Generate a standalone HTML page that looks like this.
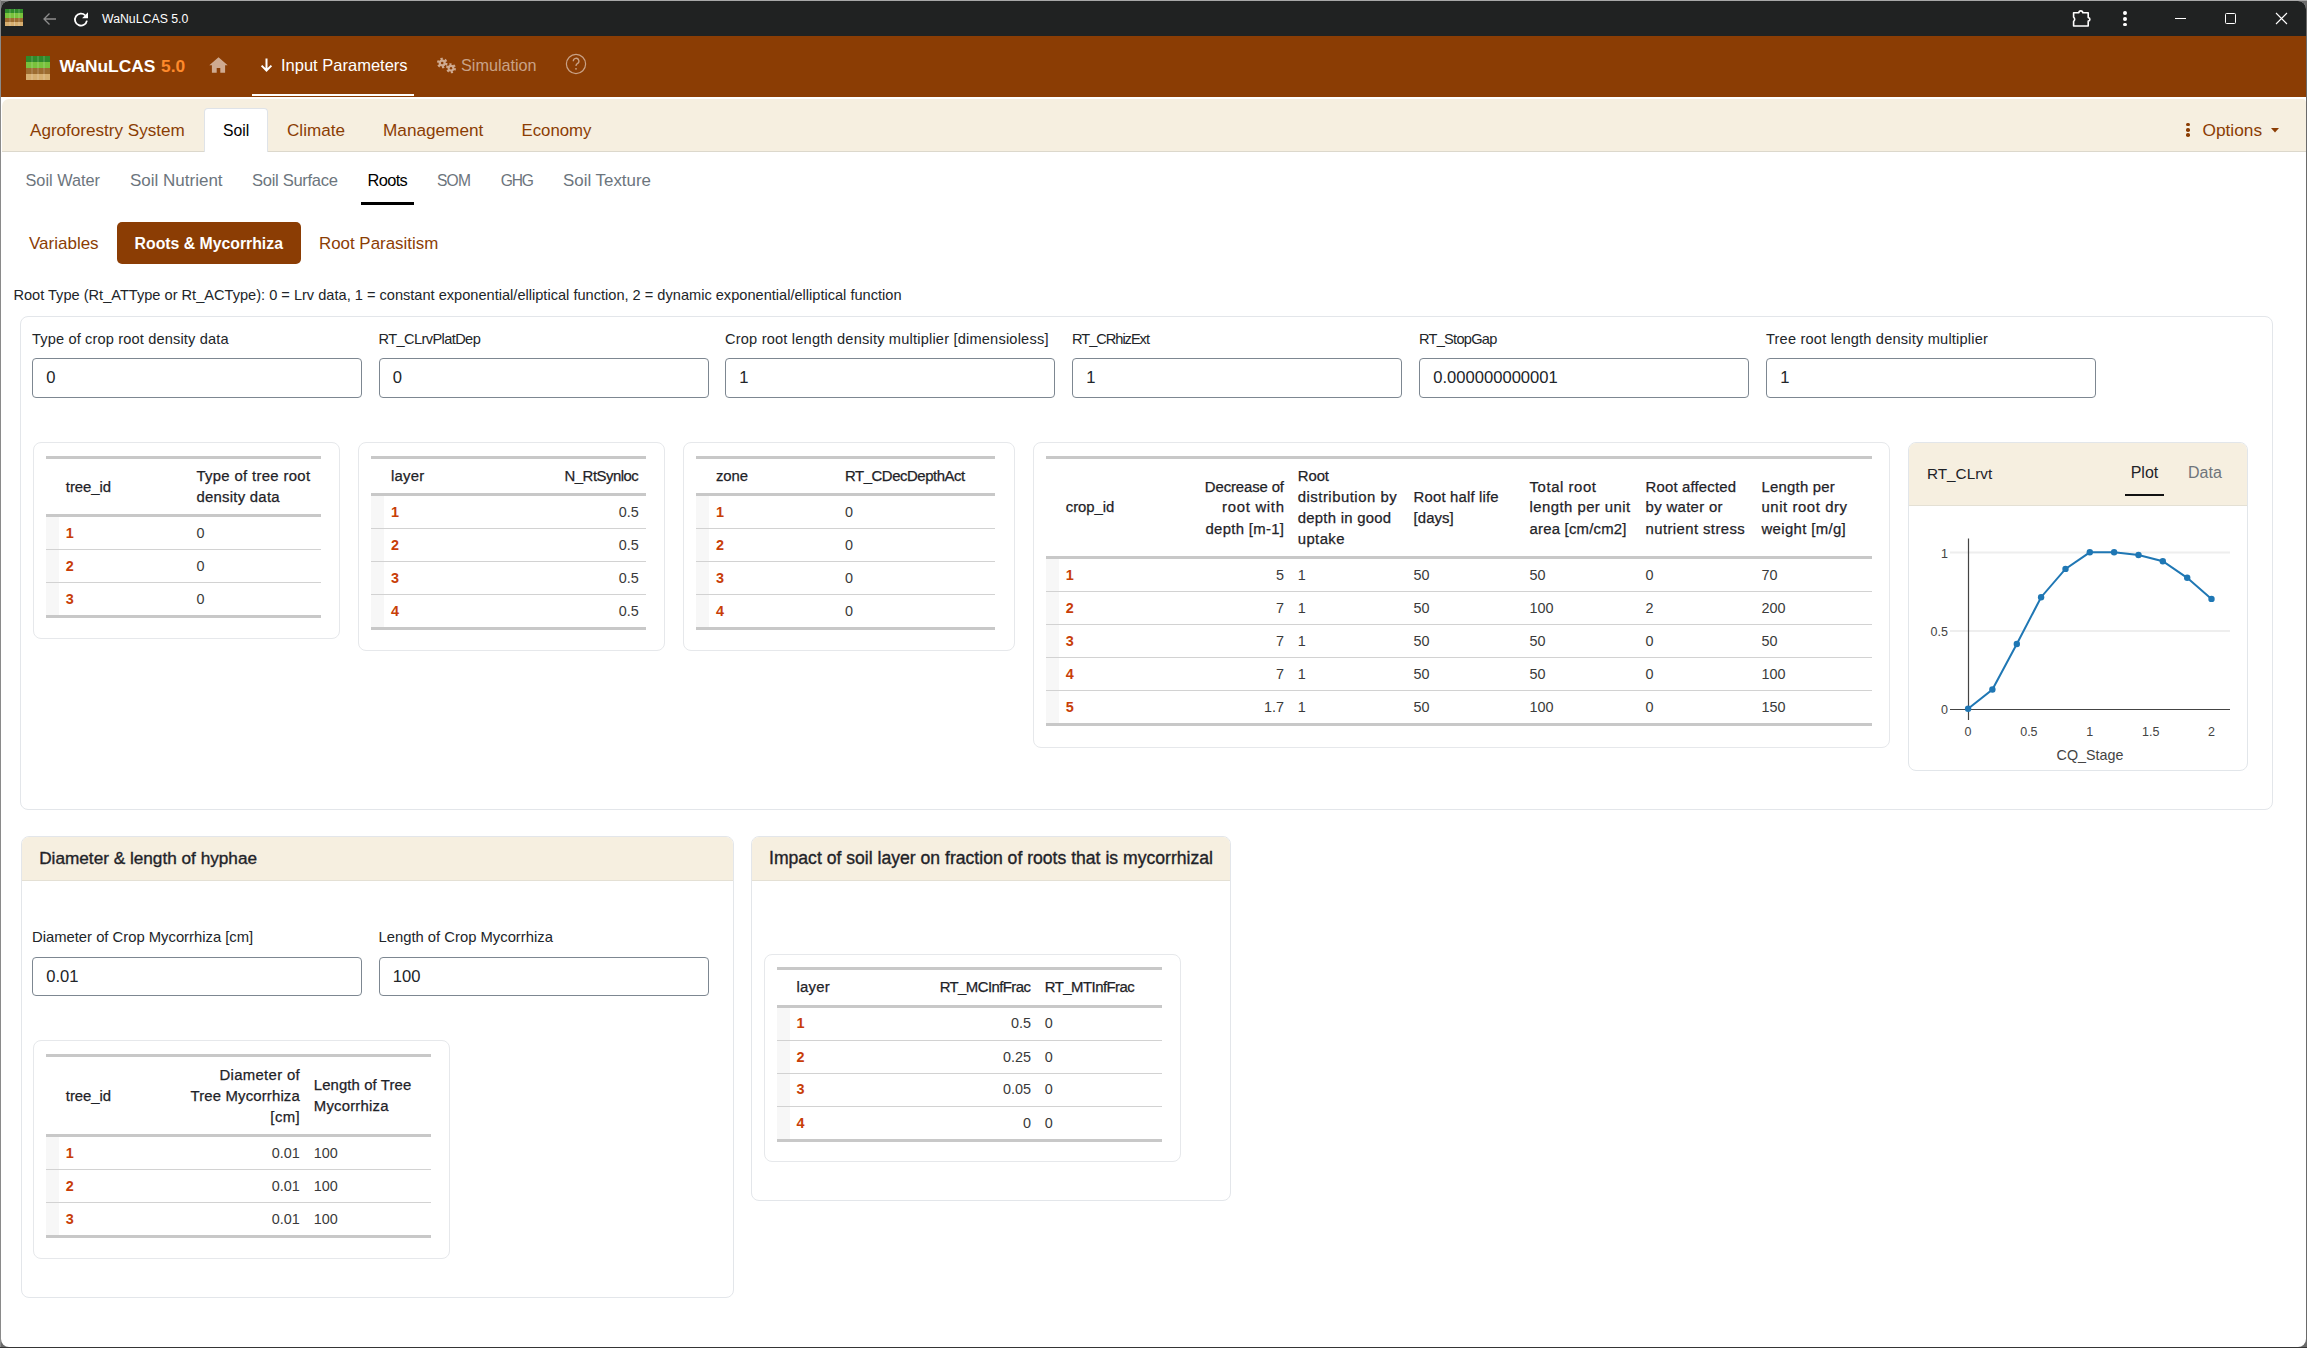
<!DOCTYPE html>
<html><head><meta charset="utf-8"><title>WaNuLCAS 5.0</title>
<style>
html,body{margin:0;padding:0}
body{width:2307px;height:1348px;overflow:hidden;position:relative;background:#6a6a6a;font-family:"Liberation Sans",sans-serif}
#win{position:absolute;left:1px;top:1px;width:2305px;height:1346px;background:#fff;border-radius:8px;overflow:hidden}
#tb{position:absolute;left:0;top:0;width:2307px;height:36px;background:#202222}
.t{position:absolute;white-space:pre}
.r{position:absolute}
</style></head><body>
<div style="position:absolute;left:0;top:0;width:2307px;height:1px;background:#a8a8a8"></div><div style="position:absolute;left:0;top:0;width:1px;height:1348px;background:#8a8a8a"></div><div style="position:absolute;left:0;top:1347px;width:2307px;height:1px;background:#353535"></div><div id="win"><div id="tb"></div></div>
<div style="position:absolute;left:0;top:0;width:2307px;height:1348px">
<div class="r" style="left:1px;top:36px;width:2305px;height:61px;background:#8b3d04"></div>
<svg class="r" style="left:5px;top:9px" width="18" height="17" viewBox="0 0 18 17">
<rect x="0" y="0" width="18" height="4" fill="#2f8a2a"/><rect x="0" y="4" width="18" height="5" fill="#78c23c"/>
<rect x="0" y="9" width="18" height="4" fill="#9d6c30"/><rect x="0" y="13" width="18" height="4" fill="#d6ae70"/>
<rect x="4.5" y="0" width="1" height="17" fill="#fff" opacity=".25"/><rect x="9" y="0" width="1" height="17" fill="#fff" opacity=".25"/><rect x="13.5" y="0" width="1" height="17" fill="#fff" opacity=".25"/>
</svg>
<svg class="r" style="left:42px;top:12px" width="15" height="14" viewBox="0 0 15 14"><path d="M14 7H2M7.5 1.5L2 7l5.5 5.5" stroke="#8d8d8d" stroke-width="1.3" fill="none"/></svg>
<svg class="r" style="left:73px;top:10.5px" width="17" height="17" viewBox="0 0 17 17"><path d="M13.9 9.6A6 6 0 1 1 12.2 4.3" stroke="#fff" stroke-width="1.8" fill="none"/><path d="M15 1.3V7.2H9.1z" fill="#fff"/></svg>
<div class="t" style="left:102.0px;top:12.00px;font-size:12.3px;line-height:15px;color:#ffffff;">WaNuLCAS 5.0</div>
<svg class="r" style="left:2072px;top:9px" width="21" height="19" viewBox="0 0 21 19"><path d="M1.6 3.8H6.9A1.9 1.9 0 0 1 10.7 3.8H16.2V8.6A1.7 1.7 0 0 1 16.2 12V17H1.6V12.4A2.6 2.6 0 0 0 1.6 8.2Z" stroke="#fff" stroke-width="1.6" fill="none" stroke-linejoin="round"/></svg>
<div class="r" style="left:2122.8px;top:10.9px;width:3.8px;height:3.8px;border-radius:50%;background:#fff"></div>
<div class="r" style="left:2122.8px;top:16.8px;width:3.8px;height:3.8px;border-radius:50%;background:#fff"></div>
<div class="r" style="left:2122.8px;top:22.5px;width:3.8px;height:3.8px;border-radius:50%;background:#fff"></div>
<div class="r" style="left:2175px;top:18px;width:11px;height:1.2px;background:#fff"></div>
<div class="r" style="left:2225px;top:13px;width:11px;height:11px;border:1.1px solid #fff;border-radius:1.5px;box-sizing:border-box"></div>
<svg class="r" style="left:2275px;top:12px" width="13" height="13" viewBox="0 0 13 13"><path d="M1 1L12 12M12 1L1 12" stroke="#fff" stroke-width="1.1"/></svg>
<svg class="r" style="left:26px;top:56px" width="24" height="24" viewBox="0 0 24 24">
<rect x="0" y="0" width="24" height="6" fill="#2f8a2a"/><rect x="0" y="6" width="24" height="6" fill="#78c23c"/>
<rect x="0" y="12" width="24" height="6" fill="#9d6c30"/><rect x="0" y="18" width="24" height="6" fill="#d6ae70"/>
<rect x="5.5" y="0" width="1" height="24" fill="#fff" opacity=".25"/><rect x="11.5" y="0" width="1" height="24" fill="#fff" opacity=".25"/><rect x="17.5" y="0" width="1" height="24" fill="#fff" opacity=".25"/>
</svg>
<div class="t" style="left:59.5px;top:55.00px;font-size:17.4px;line-height:22px;color:#ffffff;font-weight:700;">WaNuLCAS</div>
<div class="t" style="left:161.0px;top:55.00px;font-size:17.4px;line-height:22px;color:#ff8a2b;font-weight:700;">5.0</div>
<svg class="r" style="left:209px;top:57px" width="19" height="16" viewBox="0 0 19 16"><path d="M9.5 0.3L0.3 8.3H2.9V15.8H7.7V11H11.3V15.8H16.1V8.3H18.7Z" fill="#cfaa90"/></svg>
<svg class="r" style="left:260px;top:58px" width="13" height="15" viewBox="0 0 13 15"><path d="M6.5 0.5V12.5M1.6 7.6L6.5 12.5L11.4 7.6" stroke="#fff" stroke-width="2" fill="none"/></svg>
<div class="t" style="left:281.0px;top:55.00px;font-size:16.5px;line-height:21px;color:#ffffff;">Input Parameters</div>
<div class="r" style="left:252px;top:93.5px;width:162px;height:2.5px;background:#fff"></div>
<svg class="r" style="left:436px;top:57px" width="22" height="18" viewBox="0 0 22 18">
<circle cx="6.2" cy="6" r="3.9" fill="none" stroke="#cfaa90" stroke-width="2.8" stroke-dasharray="2.1 1.98"/>
<circle cx="6.2" cy="6" r="3.6" fill="#cfaa90"/><circle cx="6.2" cy="6" r="1.3" fill="#8b3d04"/>
<circle cx="15" cy="11.2" r="3.7" fill="none" stroke="#cfaa90" stroke-width="2.6" stroke-dasharray="1.95 1.92"/>
<circle cx="15" cy="11.2" r="3.4" fill="#cfaa90"/><circle cx="15" cy="11.2" r="1.2" fill="#8b3d04"/>
</svg>
<div class="t" style="left:461.0px;top:55.00px;font-size:16.2px;line-height:20px;color:#c9a287;">Simulation</div>
<svg class="r" style="left:565px;top:52.8px" width="22" height="22" viewBox="0 0 22 22"><circle cx="11" cy="11" r="9.6" stroke="#c9a287" stroke-width="1.2" fill="none"/><path d="M8.3 8.2A2.8 2.8 0 1 1 12.3 10.6C11.3 11.2 11 11.8 11 13" stroke="#c9a287" stroke-width="1.3" fill="none"/><circle cx="11" cy="15.8" r="0.9" fill="#c9a287"/></svg>
<div class="r" style="left:1px;top:97px;width:2305px;height:55px;background:#fff"></div>
<div class="r" style="left:2px;top:99px;width:2304px;height:52px;background:#f6efe0;border-radius:7px 4px 0 0;border-bottom:1px solid #dcd8cc"></div>
<div class="r" style="left:204px;top:108px;width:64px;height:44px;background:#fff;border:1px solid #dfe3e8;border-bottom:none;border-radius:4px 4px 0 0;box-sizing:border-box"></div>
<div class="t" style="left:30.0px;top:120.00px;font-size:17.1px;line-height:21px;color:#8b3d04;">Agroforestry System</div>
<div class="t" style="left:223.0px;top:121.00px;font-size:15.75px;line-height:20px;color:#000000;">Soil</div>
<div class="t" style="left:287.0px;top:120.00px;font-size:17.1px;line-height:21px;color:#8b3d04;">Climate</div>
<div class="t" style="left:383.0px;top:119.00px;font-size:17.2px;line-height:22px;color:#8b3d04;">Management</div>
<div class="t" style="left:521.5px;top:120.00px;font-size:16.8px;line-height:21px;color:#8b3d04;">Economy</div>
<div class="r" style="left:2186.2px;top:122.8px;width:3.6px;height:3.6px;border-radius:50%;background:#8b3d04"></div>
<div class="r" style="left:2186.2px;top:128.1px;width:3.6px;height:3.6px;border-radius:50%;background:#8b3d04"></div>
<div class="r" style="left:2186.2px;top:133.2px;width:3.6px;height:3.6px;border-radius:50%;background:#8b3d04"></div>
<div class="t" style="left:2202.5px;top:119.00px;font-size:17.3px;line-height:22px;color:#8b3d04;">Options</div>
<svg class="r" style="left:2271px;top:128px" width="8" height="4.5" viewBox="0 0 8 4.5"><path d="M0 0H8L4 4.5Z" fill="#8b3d04"/></svg>
<div class="t" style="left:25.5px;top:170.00px;font-size:16.3px;line-height:20px;color:#6c757d;">Soil Water</div>
<div class="t" style="left:130.0px;top:170.00px;font-size:17.0px;line-height:21px;color:#6c757d;">Soil Nutrient</div>
<div class="t" style="left:252.0px;top:170.00px;font-size:16.6px;line-height:21px;color:#6c757d;letter-spacing:-0.316px;">Soil Surface</div>
<div class="t" style="left:367.5px;top:170.00px;font-size:16.4px;line-height:20px;color:#000000;letter-spacing:-0.626px;">Roots</div>
<div class="r" style="left:361px;top:201.5px;width:53px;height:3px;background:#000"></div>
<div class="t" style="left:437.0px;top:171.00px;font-size:15.6px;line-height:20px;color:#6c757d;letter-spacing:-0.784px;">SOM</div>
<div class="t" style="left:500.8px;top:171.00px;font-size:15.6px;line-height:20px;color:#6c757d;letter-spacing:-1.184px;">GHG</div>
<div class="t" style="left:563.0px;top:170.00px;font-size:16.9px;line-height:21px;color:#6c757d;">Soil Texture</div>
<div class="t" style="left:29.0px;top:233.00px;font-size:17.0px;line-height:21px;color:#8b3d04;">Variables</div>
<div class="r" style="left:117px;top:222px;width:184px;height:42px;background:#8b3d04;border-radius:5px"></div>
<div class="t" style="left:134.6px;top:234.00px;font-size:15.8px;line-height:20px;color:#ffffff;font-weight:700;">Roots &amp; Mycorrhiza</div>
<div class="t" style="left:319.0px;top:233.00px;font-size:16.9px;line-height:21px;color:#8b3d04;">Root Parasitism</div>
<div class="t" style="left:13.4px;top:286.00px;font-size:14.6px;line-height:18px;color:#212529;">Root Type (Rt_ATType or Rt_ACType): 0 = Lrv data, 1 = constant exponential/elliptical function, 2 = dynamic exponential/elliptical function</div>
<div class="r" style="left:20px;top:316px;width:2253px;height:494px;border:1px solid #e3e6ea;border-radius:8px;box-sizing:border-box"></div>
<div class="t" style="left:32.0px;top:330.00px;font-size:14.6px;line-height:18px;color:#212529;letter-spacing:0.147px;">Type of crop root density data</div>
<div class="r" style="left:32px;top:358px;width:330px;height:40px;border:1px solid #7d8791;border-radius:4px;box-sizing:border-box;background:#fff"></div>
<div class="t" style="left:46.2px;top:367.00px;font-size:16.6px;line-height:21px;color:#212529;">0</div>
<div class="t" style="left:378.5px;top:330.00px;font-size:14.6px;line-height:18px;color:#212529;letter-spacing:-0.599px;">RT_CLrvPlatDep</div>
<div class="r" style="left:378.5px;top:358px;width:330px;height:40px;border:1px solid #7d8791;border-radius:4px;box-sizing:border-box;background:#fff"></div>
<div class="t" style="left:392.7px;top:367.00px;font-size:16.6px;line-height:21px;color:#212529;">0</div>
<div class="t" style="left:725.0px;top:330.00px;font-size:14.6px;line-height:18px;color:#212529;letter-spacing:0.195px;">Crop root length density multiplier [dimensioless]</div>
<div class="r" style="left:725px;top:358px;width:330px;height:40px;border:1px solid #7d8791;border-radius:4px;box-sizing:border-box;background:#fff"></div>
<div class="t" style="left:739.2px;top:367.00px;font-size:16.6px;line-height:21px;color:#212529;">1</div>
<div class="t" style="left:1072.0px;top:330.00px;font-size:14.6px;line-height:18px;color:#212529;letter-spacing:-1.018px;">RT_CRhizExt</div>
<div class="r" style="left:1072px;top:358px;width:330px;height:40px;border:1px solid #7d8791;border-radius:4px;box-sizing:border-box;background:#fff"></div>
<div class="t" style="left:1086.2px;top:367.00px;font-size:16.6px;line-height:21px;color:#212529;">1</div>
<div class="t" style="left:1419.0px;top:330.00px;font-size:14.6px;line-height:18px;color:#212529;letter-spacing:-0.741px;">RT_StopGap</div>
<div class="r" style="left:1419px;top:358px;width:330px;height:40px;border:1px solid #7d8791;border-radius:4px;box-sizing:border-box;background:#fff"></div>
<div class="t" style="left:1433.2px;top:367.00px;font-size:16.6px;line-height:21px;color:#212529;">0.000000000001</div>
<div class="t" style="left:1766.0px;top:330.00px;font-size:14.6px;line-height:18px;color:#212529;letter-spacing:0.196px;">Tree root length density multiplier</div>
<div class="r" style="left:1766px;top:358px;width:330px;height:40px;border:1px solid #7d8791;border-radius:4px;box-sizing:border-box;background:#fff"></div>
<div class="t" style="left:1780.2px;top:367.00px;font-size:16.6px;line-height:21px;color:#212529;">1</div>
<div class="r" style="left:32.5px;top:442px;width:307.5px;height:196.5px;border:1px solid #e6e8eb;border-radius:8px;box-sizing:border-box"></div>
<div class="r" style="left:46px;top:456px;width:275px;height:3px;background:#c8c8c8"></div>
<div class="r" style="left:46px;top:514px;width:275px;height:3px;background:#c8c8c8"></div>
<div class="r" style="left:46px;top:517px;width:13px;height:99px;background:#f7f7f7"></div>
<div class="r" style="left:46px;top:549px;width:275px;height:1px;background:#d2d2d2"></div>
<div class="r" style="left:46px;top:582px;width:275px;height:1px;background:#d2d2d2"></div>
<div class="r" style="left:46px;top:615px;width:275px;height:3px;background:#c8c8c8"></div>
<div class="t" style="left:65.8px;top:478.00px;font-size:14.9px;line-height:19px;color:#1f2328;-webkit-text-stroke:0.25px #1f2328;letter-spacing:-0.049px;">tree_id</div>
<div class="t" style="left:196.4px;top:467.00px;font-size:14.9px;line-height:19px;color:#1f2328;-webkit-text-stroke:0.25px #1f2328;letter-spacing:0.327px;">Type of tree root</div>
<div class="t" style="left:196.4px;top:488.00px;font-size:14.9px;line-height:19px;color:#1f2328;-webkit-text-stroke:0.25px #1f2328;letter-spacing:0.265px;">density data</div>
<div class="t" style="left:65.8px;top:524.00px;font-size:14.4px;line-height:18px;color:#c83e08;font-weight:700;">1</div>
<div class="t" style="left:196.4px;top:524.00px;font-size:14.4px;line-height:18px;color:#3a3a3a;">0</div>
<div class="t" style="left:65.8px;top:557.00px;font-size:14.4px;line-height:18px;color:#c83e08;font-weight:700;">2</div>
<div class="t" style="left:196.4px;top:557.00px;font-size:14.4px;line-height:18px;color:#3a3a3a;">0</div>
<div class="t" style="left:65.8px;top:590.00px;font-size:14.4px;line-height:18px;color:#c83e08;font-weight:700;">3</div>
<div class="t" style="left:196.4px;top:590.00px;font-size:14.4px;line-height:18px;color:#3a3a3a;">0</div>
<div class="r" style="left:357.5px;top:442px;width:307.5px;height:208.5px;border:1px solid #e6e8eb;border-radius:8px;box-sizing:border-box"></div>
<div class="r" style="left:371px;top:456px;width:275px;height:3px;background:#c8c8c8"></div>
<div class="r" style="left:371px;top:493px;width:275px;height:3px;background:#c8c8c8"></div>
<div class="r" style="left:371px;top:496px;width:13px;height:132px;background:#f7f7f7"></div>
<div class="r" style="left:371px;top:528px;width:275px;height:1px;background:#d2d2d2"></div>
<div class="r" style="left:371px;top:561px;width:275px;height:1px;background:#d2d2d2"></div>
<div class="r" style="left:371px;top:594px;width:275px;height:1px;background:#d2d2d2"></div>
<div class="r" style="left:371px;top:627px;width:275px;height:3px;background:#c8c8c8"></div>
<div class="t" style="left:390.9px;top:467.00px;font-size:14.9px;line-height:19px;color:#1f2328;-webkit-text-stroke:0.25px #1f2328;letter-spacing:0.267px;">layer</div>
<div class="t" style="right:1668.7px;text-align:right;top:467.00px;font-size:14.9px;line-height:19px;color:#1f2328;-webkit-text-stroke:0.25px #1f2328;letter-spacing:-0.486px;">N_RtSynloc</div>
<div class="t" style="left:390.9px;top:503.00px;font-size:14.4px;line-height:18px;color:#c83e08;font-weight:700;">1</div>
<div class="t" style="right:1668.2px;text-align:right;top:503.00px;font-size:14.4px;line-height:18px;color:#3a3a3a;">0.5</div>
<div class="t" style="left:390.9px;top:536.00px;font-size:14.4px;line-height:18px;color:#c83e08;font-weight:700;">2</div>
<div class="t" style="right:1668.2px;text-align:right;top:536.00px;font-size:14.4px;line-height:18px;color:#3a3a3a;">0.5</div>
<div class="t" style="left:390.9px;top:569.00px;font-size:14.4px;line-height:18px;color:#c83e08;font-weight:700;">3</div>
<div class="t" style="right:1668.2px;text-align:right;top:569.00px;font-size:14.4px;line-height:18px;color:#3a3a3a;">0.5</div>
<div class="t" style="left:390.9px;top:602.00px;font-size:14.4px;line-height:18px;color:#c83e08;font-weight:700;">4</div>
<div class="t" style="right:1668.2px;text-align:right;top:602.00px;font-size:14.4px;line-height:18px;color:#3a3a3a;">0.5</div>
<div class="r" style="left:682.5px;top:442px;width:332.0px;height:208.5px;border:1px solid #e6e8eb;border-radius:8px;box-sizing:border-box"></div>
<div class="r" style="left:696px;top:456px;width:299px;height:3px;background:#c8c8c8"></div>
<div class="r" style="left:696px;top:493px;width:299px;height:3px;background:#c8c8c8"></div>
<div class="r" style="left:696px;top:496px;width:13px;height:132px;background:#f7f7f7"></div>
<div class="r" style="left:696px;top:528px;width:299px;height:1px;background:#d2d2d2"></div>
<div class="r" style="left:696px;top:561px;width:299px;height:1px;background:#d2d2d2"></div>
<div class="r" style="left:696px;top:594px;width:299px;height:1px;background:#d2d2d2"></div>
<div class="r" style="left:696px;top:627px;width:299px;height:3px;background:#c8c8c8"></div>
<div class="t" style="left:716.0px;top:467.00px;font-size:14.9px;line-height:19px;color:#1f2328;-webkit-text-stroke:0.25px #1f2328;letter-spacing:-0.078px;">zone</div>
<div class="t" style="left:845.0px;top:467.00px;font-size:14.9px;line-height:19px;color:#1f2328;-webkit-text-stroke:0.25px #1f2328;letter-spacing:-0.445px;">RT_CDecDepthAct</div>
<div class="t" style="left:716.0px;top:503.00px;font-size:14.4px;line-height:18px;color:#c83e08;font-weight:700;">1</div>
<div class="t" style="left:845.0px;top:503.00px;font-size:14.4px;line-height:18px;color:#3a3a3a;">0</div>
<div class="t" style="left:716.0px;top:536.00px;font-size:14.4px;line-height:18px;color:#c83e08;font-weight:700;">2</div>
<div class="t" style="left:845.0px;top:536.00px;font-size:14.4px;line-height:18px;color:#3a3a3a;">0</div>
<div class="t" style="left:716.0px;top:569.00px;font-size:14.4px;line-height:18px;color:#c83e08;font-weight:700;">3</div>
<div class="t" style="left:845.0px;top:569.00px;font-size:14.4px;line-height:18px;color:#3a3a3a;">0</div>
<div class="t" style="left:716.0px;top:602.00px;font-size:14.4px;line-height:18px;color:#c83e08;font-weight:700;">4</div>
<div class="t" style="left:845.0px;top:602.00px;font-size:14.4px;line-height:18px;color:#3a3a3a;">0</div>
<div class="r" style="left:1032.5px;top:442px;width:857.5px;height:305.5px;border:1px solid #e6e8eb;border-radius:8px;box-sizing:border-box"></div>
<div class="r" style="left:1046px;top:456px;width:825.5px;height:3px;background:#c8c8c8"></div>
<div class="r" style="left:1046px;top:556px;width:825.5px;height:3px;background:#c8c8c8"></div>
<div class="r" style="left:1046px;top:559px;width:13px;height:165px;background:#f7f7f7"></div>
<div class="r" style="left:1046px;top:591px;width:825.5px;height:1px;background:#d2d2d2"></div>
<div class="r" style="left:1046px;top:624px;width:825.5px;height:1px;background:#d2d2d2"></div>
<div class="r" style="left:1046px;top:657px;width:825.5px;height:1px;background:#d2d2d2"></div>
<div class="r" style="left:1046px;top:690px;width:825.5px;height:1px;background:#d2d2d2"></div>
<div class="r" style="left:1046px;top:723px;width:825.5px;height:3px;background:#c8c8c8"></div>
<div class="t" style="left:1065.8px;top:498.00px;font-size:14.9px;line-height:19px;color:#1f2328;-webkit-text-stroke:0.25px #1f2328;letter-spacing:-0.079px;">crop_id</div>
<div class="t" style="right:1023.1px;text-align:right;top:478.00px;font-size:14.9px;line-height:19px;color:#1f2328;-webkit-text-stroke:0.25px #1f2328;letter-spacing:-0.109px;">Decrease of</div>
<div class="t" style="right:1022.3px;text-align:right;top:498.00px;font-size:14.9px;line-height:19px;color:#1f2328;-webkit-text-stroke:0.25px #1f2328;letter-spacing:0.710px;">root with</div>
<div class="t" style="right:1022.7px;text-align:right;top:520.00px;font-size:14.9px;line-height:19px;color:#1f2328;-webkit-text-stroke:0.25px #1f2328;letter-spacing:0.321px;">depth [m-1]</div>
<div class="t" style="left:1297.7px;top:467.00px;font-size:14.9px;line-height:19px;color:#1f2328;-webkit-text-stroke:0.25px #1f2328;letter-spacing:-0.046px;">Root</div>
<div class="t" style="left:1297.7px;top:488.00px;font-size:14.9px;line-height:19px;color:#1f2328;-webkit-text-stroke:0.25px #1f2328;letter-spacing:0.505px;">distribution by</div>
<div class="t" style="left:1297.7px;top:509.00px;font-size:14.9px;line-height:19px;color:#1f2328;-webkit-text-stroke:0.25px #1f2328;letter-spacing:0.259px;">depth in good</div>
<div class="t" style="left:1297.7px;top:530.00px;font-size:14.9px;line-height:19px;color:#1f2328;-webkit-text-stroke:0.25px #1f2328;letter-spacing:0.425px;">uptake</div>
<div class="t" style="left:1413.6px;top:488.00px;font-size:14.9px;line-height:19px;color:#1f2328;-webkit-text-stroke:0.25px #1f2328;letter-spacing:0.166px;">Root half life</div>
<div class="t" style="left:1413.6px;top:509.00px;font-size:14.9px;line-height:19px;color:#1f2328;-webkit-text-stroke:0.25px #1f2328;letter-spacing:0.063px;">[days]</div>
<div class="t" style="left:1529.6px;top:478.00px;font-size:14.9px;line-height:19px;color:#1f2328;-webkit-text-stroke:0.25px #1f2328;letter-spacing:0.565px;">Total root</div>
<div class="t" style="left:1529.6px;top:498.00px;font-size:14.9px;line-height:19px;color:#1f2328;-webkit-text-stroke:0.25px #1f2328;letter-spacing:0.445px;">length per unit</div>
<div class="t" style="left:1529.6px;top:520.00px;font-size:14.9px;line-height:19px;color:#1f2328;-webkit-text-stroke:0.25px #1f2328;letter-spacing:0.209px;">area [cm/cm2]</div>
<div class="t" style="left:1645.6px;top:478.00px;font-size:14.9px;line-height:19px;color:#1f2328;-webkit-text-stroke:0.25px #1f2328;letter-spacing:0.170px;">Root affected</div>
<div class="t" style="left:1645.6px;top:498.00px;font-size:14.9px;line-height:19px;color:#1f2328;-webkit-text-stroke:0.25px #1f2328;letter-spacing:0.332px;">by water or</div>
<div class="t" style="left:1645.6px;top:520.00px;font-size:14.9px;line-height:19px;color:#1f2328;-webkit-text-stroke:0.25px #1f2328;letter-spacing:0.402px;">nutrient stress</div>
<div class="t" style="left:1761.5px;top:478.00px;font-size:14.9px;line-height:19px;color:#1f2328;-webkit-text-stroke:0.25px #1f2328;letter-spacing:0.231px;">Length per</div>
<div class="t" style="left:1761.5px;top:498.00px;font-size:14.9px;line-height:19px;color:#1f2328;-webkit-text-stroke:0.25px #1f2328;letter-spacing:0.569px;">unit root dry</div>
<div class="t" style="left:1761.5px;top:520.00px;font-size:14.9px;line-height:19px;color:#1f2328;-webkit-text-stroke:0.25px #1f2328;letter-spacing:0.356px;">weight [m/g]</div>
<div class="t" style="left:1065.8px;top:566.00px;font-size:14.4px;line-height:18px;color:#c83e08;font-weight:700;">1</div>
<div class="t" style="right:1023.0px;text-align:right;top:566.00px;font-size:14.4px;line-height:18px;color:#3a3a3a;">5</div>
<div class="t" style="left:1297.7px;top:566.00px;font-size:14.4px;line-height:18px;color:#3a3a3a;">1</div>
<div class="t" style="left:1413.6px;top:566.00px;font-size:14.4px;line-height:18px;color:#3a3a3a;">50</div>
<div class="t" style="left:1529.6px;top:566.00px;font-size:14.4px;line-height:18px;color:#3a3a3a;">50</div>
<div class="t" style="left:1645.6px;top:566.00px;font-size:14.4px;line-height:18px;color:#3a3a3a;">0</div>
<div class="t" style="left:1761.5px;top:566.00px;font-size:14.4px;line-height:18px;color:#3a3a3a;">70</div>
<div class="t" style="left:1065.8px;top:599.00px;font-size:14.4px;line-height:18px;color:#c83e08;font-weight:700;">2</div>
<div class="t" style="right:1023.0px;text-align:right;top:599.00px;font-size:14.4px;line-height:18px;color:#3a3a3a;">7</div>
<div class="t" style="left:1297.7px;top:599.00px;font-size:14.4px;line-height:18px;color:#3a3a3a;">1</div>
<div class="t" style="left:1413.6px;top:599.00px;font-size:14.4px;line-height:18px;color:#3a3a3a;">50</div>
<div class="t" style="left:1529.6px;top:599.00px;font-size:14.4px;line-height:18px;color:#3a3a3a;">100</div>
<div class="t" style="left:1645.6px;top:599.00px;font-size:14.4px;line-height:18px;color:#3a3a3a;">2</div>
<div class="t" style="left:1761.5px;top:599.00px;font-size:14.4px;line-height:18px;color:#3a3a3a;">200</div>
<div class="t" style="left:1065.8px;top:632.00px;font-size:14.4px;line-height:18px;color:#c83e08;font-weight:700;">3</div>
<div class="t" style="right:1023.0px;text-align:right;top:632.00px;font-size:14.4px;line-height:18px;color:#3a3a3a;">7</div>
<div class="t" style="left:1297.7px;top:632.00px;font-size:14.4px;line-height:18px;color:#3a3a3a;">1</div>
<div class="t" style="left:1413.6px;top:632.00px;font-size:14.4px;line-height:18px;color:#3a3a3a;">50</div>
<div class="t" style="left:1529.6px;top:632.00px;font-size:14.4px;line-height:18px;color:#3a3a3a;">50</div>
<div class="t" style="left:1645.6px;top:632.00px;font-size:14.4px;line-height:18px;color:#3a3a3a;">0</div>
<div class="t" style="left:1761.5px;top:632.00px;font-size:14.4px;line-height:18px;color:#3a3a3a;">50</div>
<div class="t" style="left:1065.8px;top:665.00px;font-size:14.4px;line-height:18px;color:#c83e08;font-weight:700;">4</div>
<div class="t" style="right:1023.0px;text-align:right;top:665.00px;font-size:14.4px;line-height:18px;color:#3a3a3a;">7</div>
<div class="t" style="left:1297.7px;top:665.00px;font-size:14.4px;line-height:18px;color:#3a3a3a;">1</div>
<div class="t" style="left:1413.6px;top:665.00px;font-size:14.4px;line-height:18px;color:#3a3a3a;">50</div>
<div class="t" style="left:1529.6px;top:665.00px;font-size:14.4px;line-height:18px;color:#3a3a3a;">50</div>
<div class="t" style="left:1645.6px;top:665.00px;font-size:14.4px;line-height:18px;color:#3a3a3a;">0</div>
<div class="t" style="left:1761.5px;top:665.00px;font-size:14.4px;line-height:18px;color:#3a3a3a;">100</div>
<div class="t" style="left:1065.8px;top:698.00px;font-size:14.4px;line-height:18px;color:#c83e08;font-weight:700;">5</div>
<div class="t" style="right:1023.0px;text-align:right;top:698.00px;font-size:14.4px;line-height:18px;color:#3a3a3a;">1.7</div>
<div class="t" style="left:1297.7px;top:698.00px;font-size:14.4px;line-height:18px;color:#3a3a3a;">1</div>
<div class="t" style="left:1413.6px;top:698.00px;font-size:14.4px;line-height:18px;color:#3a3a3a;">50</div>
<div class="t" style="left:1529.6px;top:698.00px;font-size:14.4px;line-height:18px;color:#3a3a3a;">100</div>
<div class="t" style="left:1645.6px;top:698.00px;font-size:14.4px;line-height:18px;color:#3a3a3a;">0</div>
<div class="t" style="left:1761.5px;top:698.00px;font-size:14.4px;line-height:18px;color:#3a3a3a;">150</div>
<div class="r" style="left:1907.5px;top:442px;width:340px;height:329px;border:1.5px solid #e2e6ea;border-radius:8px;box-sizing:border-box;overflow:hidden"><div style="position:absolute;left:0;top:0;right:0;height:61.5px;background:#f6efe0;border-bottom:1px solid #e4e0d4"></div></div>
<div class="t" style="left:1927.0px;top:464.00px;font-size:15.3px;line-height:19px;color:#1f2328;">RT_CLrvt</div>
<div class="t" style="left:2130.7px;top:463.00px;font-size:16.0px;line-height:20px;color:#1f2328;">Plot</div>
<div class="r" style="left:2125px;top:493.5px;width:39px;height:2.5px;background:#111"></div>
<div class="t" style="left:2188.0px;top:463.00px;font-size:16.0px;line-height:20px;color:#6f757b;">Data</div>
<svg class="r" style="left:0;top:0" width="2307" height="1348"><line x1="1950" x2="2230" y1="552.5" y2="552.5" stroke="#eeeeee" stroke-width="2"/><line x1="1950" x2="2230" y1="631" y2="631" stroke="#eeeeee" stroke-width="2"/><line x1="1968.5" x2="1968.5" y1="538.5" y2="720" stroke="#444" stroke-width="1.2"/><line x1="1950" x2="2230" y1="709.5" y2="709.5" stroke="#444" stroke-width="1.2"/><polyline fill="none" stroke="#1f77b4" stroke-width="2" points="1968.1,708.7 1992.4,689.5 2016.8,644.0 2041.1,597.2 2065.5,568.9 2089.8,552.3 2114.1,552.3 2138.5,555.0 2162.8,561.2 2187.2,577.8 2211.5,598.9"/><circle cx="1968.1" cy="708.7" r="3.2" fill="#1f77b4"/><circle cx="1992.4" cy="689.5" r="3.2" fill="#1f77b4"/><circle cx="2016.8" cy="644.0" r="3.2" fill="#1f77b4"/><circle cx="2041.1" cy="597.2" r="3.2" fill="#1f77b4"/><circle cx="2065.5" cy="568.9" r="3.2" fill="#1f77b4"/><circle cx="2089.8" cy="552.3" r="3.2" fill="#1f77b4"/><circle cx="2114.1" cy="552.3" r="3.2" fill="#1f77b4"/><circle cx="2138.5" cy="555.0" r="3.2" fill="#1f77b4"/><circle cx="2162.8" cy="561.2" r="3.2" fill="#1f77b4"/><circle cx="2187.2" cy="577.8" r="3.2" fill="#1f77b4"/><circle cx="2211.5" cy="598.9" r="3.2" fill="#1f77b4"/></svg>
<div class="t" style="right:359.0px;text-align:right;top:546.00px;font-size:12.5px;line-height:16px;color:#444;">1</div>
<div class="t" style="right:359.0px;text-align:right;top:624.00px;font-size:12.5px;line-height:16px;color:#444;">0.5</div>
<div class="t" style="right:359.0px;text-align:right;top:702.00px;font-size:12.5px;line-height:16px;color:#444;">0</div>
<div class="t" style="left:1668.1px;width:600px;text-align:center;top:724.00px;font-size:12.5px;line-height:16px;color:#444;">0</div>
<div class="t" style="left:1728.9px;width:600px;text-align:center;top:724.00px;font-size:12.5px;line-height:16px;color:#444;">0.5</div>
<div class="t" style="left:1789.8px;width:600px;text-align:center;top:724.00px;font-size:12.5px;line-height:16px;color:#444;">1</div>
<div class="t" style="left:1850.7px;width:600px;text-align:center;top:724.00px;font-size:12.5px;line-height:16px;color:#444;">1.5</div>
<div class="t" style="left:1911.5px;width:600px;text-align:center;top:724.00px;font-size:12.5px;line-height:16px;color:#444;">2</div>
<div class="t" style="left:1790.0px;width:600px;text-align:center;top:746.00px;font-size:14.3px;line-height:18px;color:#444;">CQ_Stage</div>
<div class="r" style="left:20.5px;top:836px;width:713px;height:461.5px;border:1px solid #e3e6ea;border-radius:8px;box-sizing:border-box;overflow:hidden"><div style="position:absolute;left:0;top:0;right:0;height:43px;background:#f6efe0;border-bottom:1px solid #e4e0d4"></div></div>
<div class="t" style="left:39.2px;top:847.00px;font-size:17.2px;line-height:22px;color:#1f2328;-webkit-text-stroke:0.35px #1f2328;">Diameter &amp; length of hyphae</div>
<div class="t" style="left:32.0px;top:928.00px;font-size:14.8px;line-height:18px;color:#212529;">Diameter of Crop Mycorrhiza [cm]</div>
<div class="r" style="left:32px;top:956.5px;width:330px;height:39.5px;border:1px solid #7d8791;border-radius:4px;box-sizing:border-box;background:#fff"></div>
<div class="t" style="left:46.2px;top:966.00px;font-size:16.6px;line-height:21px;color:#212529;">0.01</div>
<div class="t" style="left:378.5px;top:928.00px;font-size:14.8px;line-height:18px;color:#212529;">Length of Crop Mycorrhiza</div>
<div class="r" style="left:378.5px;top:956.5px;width:330px;height:39.5px;border:1px solid #7d8791;border-radius:4px;box-sizing:border-box;background:#fff"></div>
<div class="t" style="left:392.7px;top:966.00px;font-size:16.6px;line-height:21px;color:#212529;">100</div>
<div class="r" style="left:32.5px;top:1040px;width:417.0px;height:219px;border:1px solid #e6e8eb;border-radius:8px;box-sizing:border-box"></div>
<div class="r" style="left:46px;top:1054.3px;width:385px;height:3px;background:#c8c8c8"></div>
<div class="r" style="left:46px;top:1134.3px;width:385px;height:3px;background:#c8c8c8"></div>
<div class="r" style="left:46px;top:1137.3px;width:13px;height:99px;background:#f7f7f7"></div>
<div class="r" style="left:46px;top:1169.3px;width:385px;height:1px;background:#d2d2d2"></div>
<div class="r" style="left:46px;top:1202.3px;width:385px;height:1px;background:#d2d2d2"></div>
<div class="r" style="left:46px;top:1235.3px;width:385px;height:3px;background:#c8c8c8"></div>
<div class="t" style="left:65.8px;top:1087.00px;font-size:14.9px;line-height:19px;color:#1f2328;-webkit-text-stroke:0.25px #1f2328;letter-spacing:-0.049px;">tree_id</div>
<div class="t" style="right:2007.0px;text-align:right;top:1066.00px;font-size:14.9px;line-height:19px;color:#1f2328;-webkit-text-stroke:0.25px #1f2328;letter-spacing:0.327px;">Diameter of</div>
<div class="t" style="right:2007.1px;text-align:right;top:1087.00px;font-size:14.9px;line-height:19px;color:#1f2328;-webkit-text-stroke:0.25px #1f2328;letter-spacing:0.155px;">Tree Mycorrhiza</div>
<div class="t" style="right:2006.9px;text-align:right;top:1108.00px;font-size:14.9px;line-height:19px;color:#1f2328;-webkit-text-stroke:0.25px #1f2328;letter-spacing:0.413px;">[cm]</div>
<div class="t" style="left:313.8px;top:1076.00px;font-size:14.9px;line-height:19px;color:#1f2328;-webkit-text-stroke:0.25px #1f2328;letter-spacing:0.107px;">Length of Tree</div>
<div class="t" style="left:313.8px;top:1097.00px;font-size:14.9px;line-height:19px;color:#1f2328;-webkit-text-stroke:0.25px #1f2328;letter-spacing:0.207px;">Mycorrhiza</div>
<div class="t" style="left:65.8px;top:1144.00px;font-size:14.4px;line-height:18px;color:#c83e08;font-weight:700;">1</div>
<div class="t" style="right:2007.3px;text-align:right;top:1144.00px;font-size:14.4px;line-height:18px;color:#3a3a3a;">0.01</div>
<div class="t" style="left:313.8px;top:1144.00px;font-size:14.4px;line-height:18px;color:#3a3a3a;">100</div>
<div class="t" style="left:65.8px;top:1177.00px;font-size:14.4px;line-height:18px;color:#c83e08;font-weight:700;">2</div>
<div class="t" style="right:2007.3px;text-align:right;top:1177.00px;font-size:14.4px;line-height:18px;color:#3a3a3a;">0.01</div>
<div class="t" style="left:313.8px;top:1177.00px;font-size:14.4px;line-height:18px;color:#3a3a3a;">100</div>
<div class="t" style="left:65.8px;top:1210.00px;font-size:14.4px;line-height:18px;color:#c83e08;font-weight:700;">3</div>
<div class="t" style="right:2007.3px;text-align:right;top:1210.00px;font-size:14.4px;line-height:18px;color:#3a3a3a;">0.01</div>
<div class="t" style="left:313.8px;top:1210.00px;font-size:14.4px;line-height:18px;color:#3a3a3a;">100</div>
<div class="r" style="left:751px;top:836px;width:479.5px;height:364.5px;border:1px solid #e3e6ea;border-radius:8px;box-sizing:border-box;overflow:hidden"><div style="position:absolute;left:0;top:0;right:0;height:43px;background:#f6efe0;border-bottom:1px solid #e4e0d4"></div></div>
<div class="t" style="left:769.0px;top:847.00px;font-size:17.6px;line-height:22px;color:#1f2328;-webkit-text-stroke:0.35px #1f2328;">Impact of soil layer on fraction of roots that is mycorrhizal</div>
<div class="r" style="left:763.5px;top:953.5px;width:417.0px;height:208.0px;border:1px solid #e6e8eb;border-radius:8px;box-sizing:border-box"></div>
<div class="r" style="left:777px;top:967px;width:385px;height:3px;background:#c8c8c8"></div>
<div class="r" style="left:777px;top:1004.5px;width:385px;height:3px;background:#c8c8c8"></div>
<div class="r" style="left:777px;top:1007.5px;width:13px;height:132px;background:#f7f7f7"></div>
<div class="r" style="left:777px;top:1039.5px;width:385px;height:1px;background:#d2d2d2"></div>
<div class="r" style="left:777px;top:1072.5px;width:385px;height:1px;background:#d2d2d2"></div>
<div class="r" style="left:777px;top:1105.5px;width:385px;height:1px;background:#d2d2d2"></div>
<div class="r" style="left:777px;top:1138.5px;width:385px;height:3px;background:#c8c8c8"></div>
<div class="t" style="left:796.4px;top:978.00px;font-size:14.9px;line-height:19px;color:#1f2328;-webkit-text-stroke:0.25px #1f2328;letter-spacing:0.267px;">layer</div>
<div class="t" style="right:1276.6px;text-align:right;top:978.00px;font-size:14.9px;line-height:19px;color:#1f2328;-webkit-text-stroke:0.25px #1f2328;letter-spacing:-0.550px;">RT_MCInfFrac</div>
<div class="t" style="left:1044.8px;top:978.00px;font-size:14.9px;line-height:19px;color:#1f2328;-webkit-text-stroke:0.25px #1f2328;letter-spacing:-0.521px;">RT_MTInfFrac</div>
<div class="t" style="left:796.4px;top:1014.00px;font-size:14.4px;line-height:18px;color:#c83e08;font-weight:700;">1</div>
<div class="t" style="right:1276.1px;text-align:right;top:1014.00px;font-size:14.4px;line-height:18px;color:#3a3a3a;">0.5</div>
<div class="t" style="left:1044.8px;top:1014.00px;font-size:14.4px;line-height:18px;color:#3a3a3a;">0</div>
<div class="t" style="left:796.4px;top:1048.00px;font-size:14.4px;line-height:18px;color:#c83e08;font-weight:700;">2</div>
<div class="t" style="right:1276.1px;text-align:right;top:1048.00px;font-size:14.4px;line-height:18px;color:#3a3a3a;">0.25</div>
<div class="t" style="left:1044.8px;top:1048.00px;font-size:14.4px;line-height:18px;color:#3a3a3a;">0</div>
<div class="t" style="left:796.4px;top:1080.00px;font-size:14.4px;line-height:18px;color:#c83e08;font-weight:700;">3</div>
<div class="t" style="right:1276.1px;text-align:right;top:1080.00px;font-size:14.4px;line-height:18px;color:#3a3a3a;">0.05</div>
<div class="t" style="left:1044.8px;top:1080.00px;font-size:14.4px;line-height:18px;color:#3a3a3a;">0</div>
<div class="t" style="left:796.4px;top:1114.00px;font-size:14.4px;line-height:18px;color:#c83e08;font-weight:700;">4</div>
<div class="t" style="right:1276.1px;text-align:right;top:1114.00px;font-size:14.4px;line-height:18px;color:#3a3a3a;">0</div>
<div class="t" style="left:1044.8px;top:1114.00px;font-size:14.4px;line-height:18px;color:#3a3a3a;">0</div>
</div>
</body></html>
